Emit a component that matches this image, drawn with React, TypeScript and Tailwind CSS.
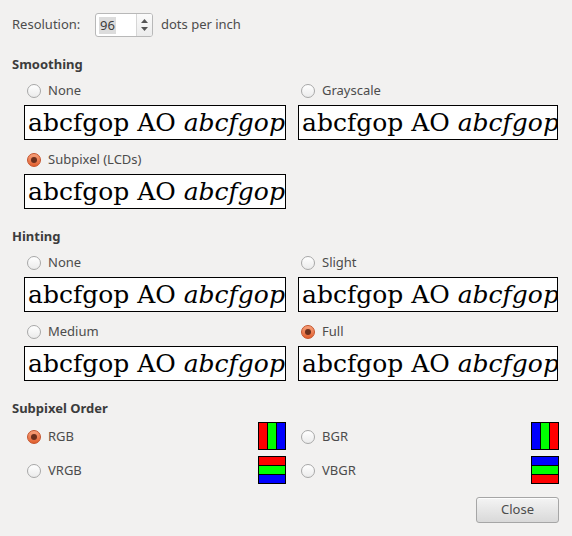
import React from "react";

const UI = { fontFamily: '"Noto Sans", "Open Sans", sans-serif' };
const SERIF = { fontFamily: '"DejaVu Serif", "Liberation Serif", serif' };

function Radio({ checked }: { checked?: boolean }) {
  if (checked) {
    return (
      <span className="flex h-[14px] w-[14px] items-center justify-center rounded-full border border-[#c4522a] bg-gradient-to-b from-[#f7a07a] to-[#e15f2c]">
        <span className="h-[6px] w-[6px] rounded-full bg-[#6b2f1c]" />
      </span>
    );
  }
  return (
    <span className="h-[14px] w-[14px] rounded-full border border-[#a8a8a8] bg-gradient-to-b from-white to-[#ebebeb]" />
  );
}

function Option({ label, checked }: { label: string; checked?: boolean }) {
  return (
    <div className="flex h-5 items-center pl-[3px] pt-px">
      <Radio checked={checked} />
      <span className="ml-[7px] text-[13px] text-[#4c4c4c]">{label}</span>
    </div>
  );
}

function Preview() {
  return (
    <div
      className="mt-[5px] flex h-[35px] items-center overflow-hidden whitespace-nowrap border border-black bg-white pl-[3px] text-[25px] leading-none text-black"
      style={SERIF}
    >
      <span>abcfgop AO&nbsp;</span>
      <span className="italic">abcfgop</span>
    </div>
  );
}

function Cell({ label, checked }: { label: string; checked?: boolean }) {
  return (
    <div className="flex flex-col">
      <Option label={label} checked={checked} />
      <Preview />
    </div>
  );
}

function Heading({ children, mt }: { children: React.ReactNode; mt: string }) {
  return (
    <div className={`${mt} h-4 text-[13px] font-bold leading-4 text-[#3c3c3c]`}>{children}</div>
  );
}

function Stripes({ vertical, colors }: { vertical?: boolean; colors: string[] }) {
  return (
    <div
      className={`flex h-[28px] w-[28px] gap-px border border-black bg-black ${vertical ? "flex-row" : "flex-col"}`}
    >
      {colors.map((c, i) => (
        <div key={i} className="flex-1" style={{ backgroundColor: c }} />
      ))}
    </div>
  );
}

function OrderRow({
  label,
  checked,
  vertical,
  colors,
}: {
  label: string;
  checked?: boolean;
  vertical?: boolean;
  colors: string[];
}) {
  return (
    <div className="flex h-[28px] items-center justify-between">
      <div className="flex items-center pl-[3px] pt-px">
        <Radio checked={checked} />
        <span className="ml-[7px] text-[13px] text-[#4c4c4c]">{label}</span>
      </div>
      <Stripes vertical={vertical} colors={colors} />
    </div>
  );
}

export default function App() {
  return (
    <div className="h-[536px] w-[572px] bg-[#f2f1f0] pl-3 pr-[14px] pt-[13px]" style={UI}>
      <div className="flex h-6 items-center">
        <span className="w-[83px] text-[13px] text-[#4c4c4c]">Resolution:</span>
        <div className="flex h-6 w-[58px] overflow-hidden rounded-[3px] border border-[#b8b8b8] bg-white">
          <div className="flex flex-1 items-center pl-[3px]">
            <span className="bg-[#dcdcdc] px-px text-[13px] leading-[17px] text-[#3c3c3c]">96</span>
          </div>
          <div className="flex w-[16px] flex-col items-center justify-center gap-[4px] border-l border-[#d6d6d6] bg-gradient-to-b from-[#fbfbfb] to-[#ececec]">
            <svg width="7" height="4" viewBox="0 0 7 4">
              <path d="M0 4 L3.5 0 L7 4 Z" fill="#555" />
            </svg>
            <svg width="7" height="4" viewBox="0 0 7 4">
              <path d="M0 0 L3.5 4 L7 0 Z" fill="#555" />
            </svg>
          </div>
        </div>
        <span className="ml-2 text-[13px] text-[#4c4c4c]">dots per inch</span>
      </div>

      <Heading mt="mt-[19px]">Smoothing</Heading>
      <div className="mt-2 grid grid-cols-[262px_260px] gap-x-3 gap-y-[9px] pl-3">
        <Cell label="None" />
        <Cell label="Grayscale" />
        <Cell label="Subpixel (LCDs)" checked />
      </div>

      <Heading mt="mt-[19px]">Hinting</Heading>
      <div className="mt-2 grid grid-cols-[262px_260px] gap-x-3 gap-y-[9px] pl-3">
        <Cell label="None" />
        <Cell label="Slight" />
        <Cell label="Medium" />
        <Cell label="Full" checked />
      </div>

      <Heading mt="mt-[19px]">Subpixel Order</Heading>
      <div className="mt-[6px] grid grid-cols-[262px_261px] gap-x-3 gap-y-[6px] pl-3">
        <OrderRow label="RGB" checked vertical colors={["#ff0000", "#00ff00", "#0000ff"]} />
        <OrderRow label="BGR" vertical colors={["#0000ff", "#00ff00", "#ff0000"]} />
        <OrderRow label="VRGB" colors={["#ff0000", "#00ff00", "#0000ff"]} />
        <OrderRow label="VBGR" colors={["#0000ff", "#00ff00", "#ff0000"]} />
      </div>

      <div className="mt-[13px] flex justify-end">
        <button className="-mr-px h-[26px] w-[83px] rounded-[3px] border border-[#a6a6a6] bg-gradient-to-b from-[#f4f4f4] to-[#d9d9d9] text-[13px] text-[#4c4c4c] shadow-[inset_0_1px_0_rgba(255,255,255,0.8)]">
          Close
        </button>
      </div>
    </div>
  );
}
